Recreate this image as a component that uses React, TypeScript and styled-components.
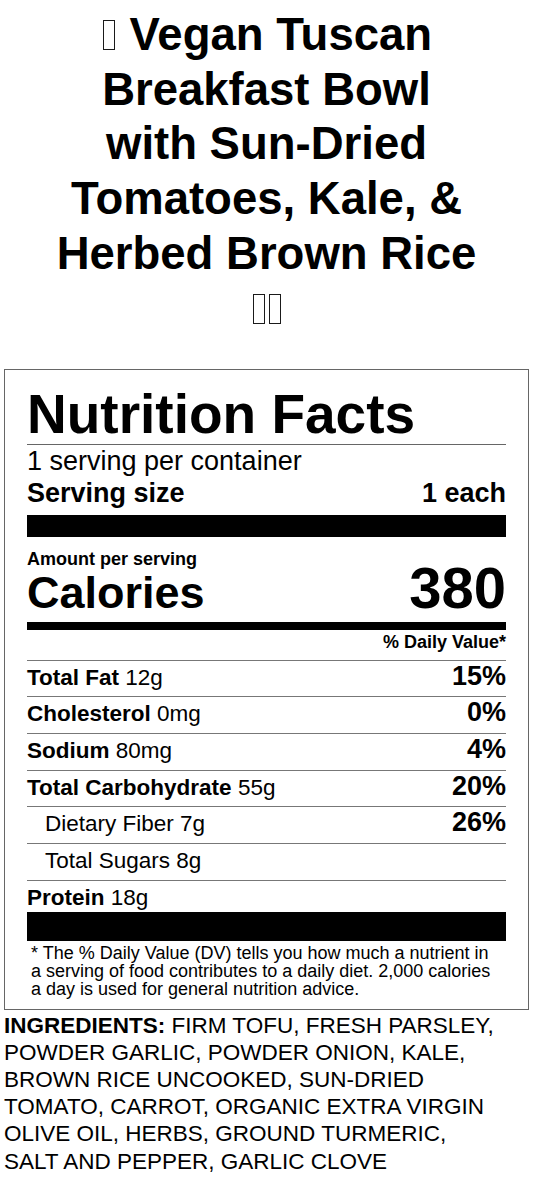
import styled, { createGlobalStyle } from "styled-components";

const GlobalStyle = createGlobalStyle`
  html, body {
    margin: 0;
    padding: 0;
    background: #fff;
  }
  body {
    font-family: "Liberation Sans", Arial, sans-serif;
    color: #000;
  }
`;

const nutrients = [
  { name: "Total Fat", amount: "12g", dv: "15%" },
  { name: "Cholesterol", amount: "0mg", dv: "0%" },
  { name: "Sodium", amount: "80mg", dv: "4%" },
  { name: "Total Carbohydrate", amount: "55g", dv: "20%" },
  { name: "Dietary Fiber", amount: "7g", dv: "26%", sub: true },
  { name: "Total Sugars", amount: "8g", sub: true },
  { name: "Protein", amount: "18g", last: true },
];

const ingredients =
  "FIRM TOFU, FRESH PARSLEY, POWDER GARLIC, POWDER ONION, KALE, BROWN RICE UNCOOKED, SUN-DRIED TOMATO, CARROT, ORGANIC EXTRA VIRGIN OLIVE OIL, HERBS, GROUND TURMERIC, SALT AND PEPPER, GARLIC CLOVE";

export default function App() {
  return (
    <Page>
      <GlobalStyle />
      <Title>
        <Tofu role="img" aria-label="🌱" /> Vegan Tuscan Breakfast Bowl with Sun-Dried Tomatoes, Kale, &amp; Herbed
        Brown Rice{" "}
        <span role="img" aria-label="🇮🇹">
          <Tofu />
          <Tofu />
        </span>
      </Title>

      <Label>
        <Heading>Nutrition Facts</Heading>
        <Servings>1 serving per container</Servings>
        <ServingSize>
          <span>Serving size</span>
          <span>1 each</span>
        </ServingSize>
        <Bar size={22} />

        <Amount>Amount per serving</Amount>
        <CaloriesRow>
          <span>Calories</span>
          <CalorieValue>380</CalorieValue>
        </CaloriesRow>
        <Bar size={8} />

        <DvHeader>% Daily Value*</DvHeader>
        {nutrients.map((n) => (
          <Row key={n.name} sub={!!n.sub} last={!!n.last}>
            <span>
              {n.sub ? n.name : <b>{n.name}</b>} {n.amount}
            </span>
            {n.dv && <Percent>{n.dv}</Percent>}
          </Row>
        ))}
        <Bar size={29} />

        <Footnote>
          * The % Daily Value (DV) tells you how much a nutrient in a serving of food contributes to a daily
          diet. 2,000 calories a day is used for general nutrition advice.
        </Footnote>
      </Label>

      <Ingredients>
        <b>INGREDIENTS:</b> {ingredients}
      </Ingredients>
    </Page>
  );
}

const Page = styled.div`
  padding: 8px 4px 24px;
`;

const Title = styled.h1`
  max-width: 426px;
  margin: 0 auto 33px;
  font-size: 45.5px;
  line-height: 54.7px;
  font-weight: 700;
  text-align: center;
`;

// missing-glyph box, as the emoji show in the reference
const Tofu = styled.span`
  display: inline-block;
  box-sizing: border-box;
  width: 12px;
  height: 30px;
  margin: 0 2px;
  border: 1.6px solid #1a1a1a;
  vertical-align: baseline;
`;

const Label = styled.section`
  border: 1px solid #666;
  padding: 17px 22px 10px;
`;

const Heading = styled.h2`
  margin: 0;
  font-size: 55px;
  line-height: 55px;
  font-weight: 700;
  padding-bottom: 2px;
  border-bottom: 1px solid #666;
`;

const Servings = styled.div`
  font-size: 27px;
  line-height: 31.5px;
  margin-top: 1px;
`;

const ServingSize = styled.div`
  display: flex;
  justify-content: space-between;
  font-size: 27px;
  line-height: 31.5px;
  font-weight: 700;
`;

const Bar = styled.div<{ size: number }>`
  height: ${(p) => p.size}px;
  background: #000;
  margin-top: ${(p) => (p.size === 22 ? 6 : 0)}px;
`;

const Amount = styled.div`
  font-size: 18px;
  line-height: 20.7px;
  font-weight: 700;
  padding-top: 12px;
`;

const CaloriesRow = styled.div`
  display: flex;
  justify-content: space-between;
  align-items: baseline;
  font-size: 45px;
  line-height: 45px;
  font-weight: 700;
  padding-bottom: 7px;
`;

const CalorieValue = styled.span`
  font-size: 58px;
  line-height: 36px;
`;

const DvHeader = styled.div`
  text-align: right;
  font-size: 18px;
  line-height: 20.7px;
  font-weight: 700;
  padding: 2px 0 7px;
  border-bottom: 1px solid #777;
`;

const Row = styled.div<{ sub: boolean; last: boolean }>`
  display: flex;
  justify-content: space-between;
  align-items: baseline;
  font-size: 22.5px;
  line-height: 26px;
  padding: 4px 0 ${(p) => (p.last ? 1 : 5.67)}px ${(p) => (p.sub ? 18 : 0)}px;
  border-bottom: ${(p) => (p.last ? "none" : "1px solid #777")};

  b {
    font-weight: 700;
  }
`;

const Percent = styled.b`
  font-size: 27px;
  line-height: 22px;
  font-weight: 700;
`;

const Footnote = styled.p`
  margin: 0;
  padding: 3px 4px 0;
  font-size: 18px;
  line-height: 18.33px;
`;

const Ingredients = styled.p`
  margin: 2px 0 0;
  padding-right: 30px;
  font-size: 22.5px;
  line-height: 27.2px;

  b {
    font-weight: 700;
  }
`;
